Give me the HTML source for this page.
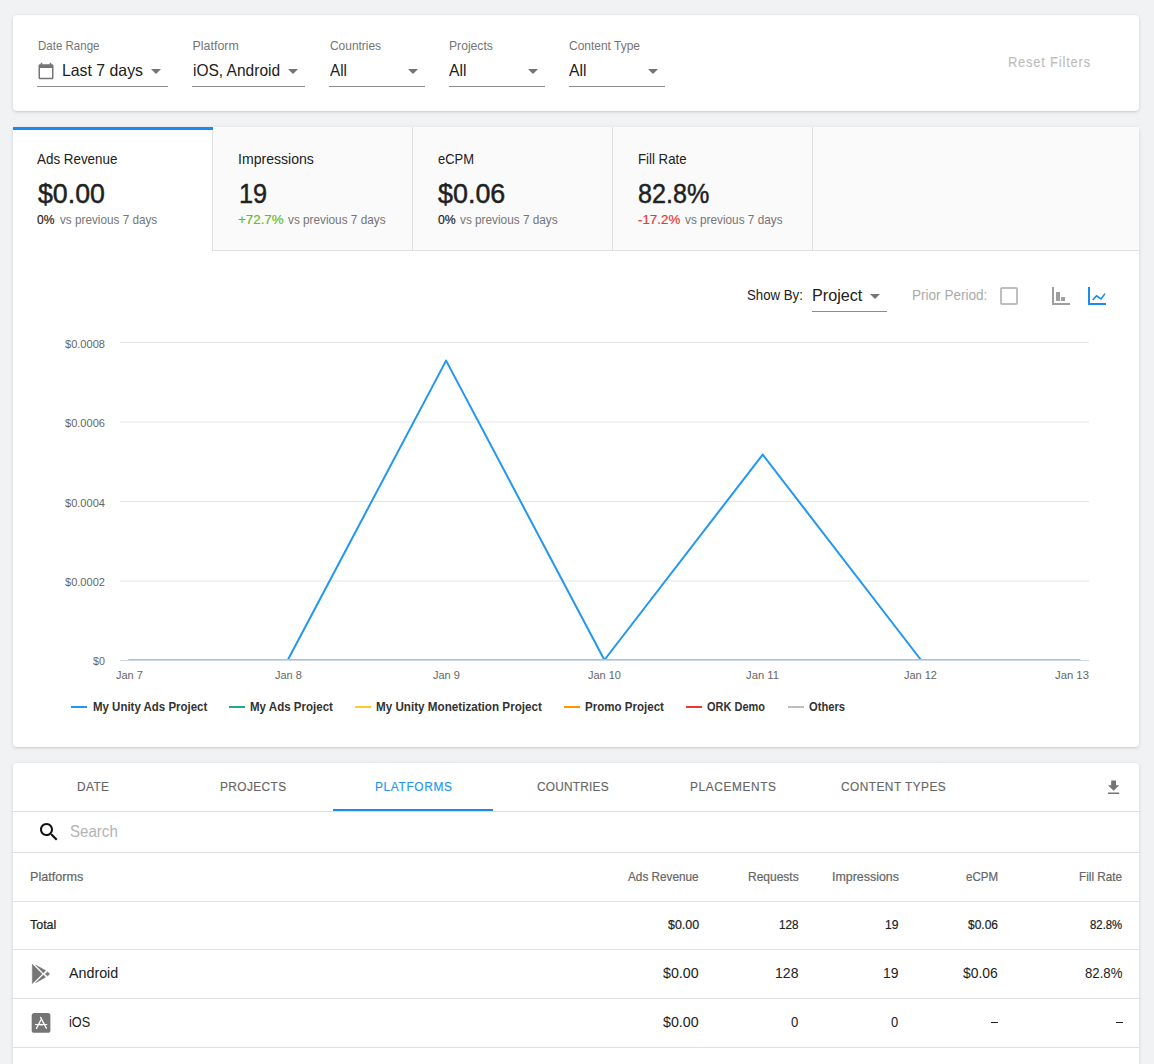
<!DOCTYPE html>
<html><head><meta charset="utf-8"><style>
html,body{margin:0;padding:0;}
body{width:1154px;height:1064px;overflow:hidden;background:#f1f2f4;position:relative;font-family:"Liberation Sans",sans-serif;}
.card{position:absolute;background:#fff;border-radius:4px;box-shadow:0 1px 4px rgba(0,0,0,.12),0 1px 1px rgba(0,0,0,.06);}
.t{position:absolute;line-height:0;white-space:nowrap;transform-origin:0 0;}
</style></head><body>
<div class="card" style="left:13px;top:15px;width:1126px;height:96px"></div>
<div class="t" style="left:37.80px;top:46px;font-size:12.4px;color:#757575;transform:scaleX(0.9290);">Date Range</div>
<div class="t" style="left:192.60px;top:46px;font-size:12.4px;color:#757575;">Platform</div>
<div class="t" style="left:329.50px;top:46px;font-size:12.4px;color:#757575;transform:scaleX(0.9632);">Countries</div>
<div class="t" style="left:449.10px;top:46px;font-size:12.4px;color:#757575;transform:scaleX(0.9799);">Projects</div>
<div class="t" style="left:569.30px;top:46px;font-size:12.4px;color:#757575;transform:scaleX(0.9667);">Content Type</div>
<div class="t" style="left:62.00px;top:70px;font-size:16.5px;color:#212121;transform:scaleX(0.9597);">Last 7 days</div>
<div class="t" style="left:192.60px;top:70px;font-size:16.5px;color:#212121;transform:scaleX(0.9401);">iOS, Android</div>
<div class="t" style="left:329.50px;top:70px;font-size:16.5px;color:#212121;transform:scaleX(0.9210);">All</div>
<div class="t" style="left:449.00px;top:70px;font-size:16.5px;color:#212121;transform:scaleX(0.9482);">All</div>
<div class="t" style="left:569.30px;top:70px;font-size:16.5px;color:#212121;transform:scaleX(0.9482);">All</div>
<div style="position:absolute;left:37px;top:86px;width:131px;height:1px;background:#8c8c8c"></div>
<svg style="position:absolute;left:151px;top:69px" width="10" height="5" viewBox="0 0 10 5"><path d="M0 0L10 0L5 5z" fill="#757575"/></svg>
<div style="position:absolute;left:192px;top:86px;width:113px;height:1px;background:#8c8c8c"></div>
<svg style="position:absolute;left:288px;top:69px" width="10" height="5" viewBox="0 0 10 5"><path d="M0 0L10 0L5 5z" fill="#757575"/></svg>
<div style="position:absolute;left:329px;top:86px;width:96px;height:1px;background:#8c8c8c"></div>
<svg style="position:absolute;left:408px;top:69px" width="10" height="5" viewBox="0 0 10 5"><path d="M0 0L10 0L5 5z" fill="#757575"/></svg>
<div style="position:absolute;left:449px;top:86px;width:96px;height:1px;background:#8c8c8c"></div>
<svg style="position:absolute;left:528px;top:69px" width="10" height="5" viewBox="0 0 10 5"><path d="M0 0L10 0L5 5z" fill="#757575"/></svg>
<div style="position:absolute;left:569px;top:86px;width:96px;height:1px;background:#8c8c8c"></div>
<svg style="position:absolute;left:648px;top:69px" width="10" height="5" viewBox="0 0 10 5"><path d="M0 0L10 0L5 5z" fill="#757575"/></svg>
<svg style="position:absolute;left:36.5px;top:62.25px" width="18" height="18" viewBox="0 0 24 24"><path fill="#757575" d="M20 3h-1V1h-2v2H7V1H5v2H4c-1.1 0-2 .9-2 2v16c0 1.1.9 2 2 2h16c1.1 0 2-.9 2-2V5c0-1.1-.9-2-2-2zm0 18H4V8h16v13z"/></svg>
<div class="t" style="left:1008.20px;top:62px;font-size:14.3px;color:#bdbdbd;letter-spacing:0.914px;-webkit-text-stroke:0.15px #bdbdbd;transform:scaleX(0.9000);">Reset Filters</div>
<div class="card" style="left:13px;top:127px;width:1126px;height:620px"></div>
<div style="position:absolute;left:213px;top:127px;width:926px;height:123px;background:#fafafa;border-bottom:1px solid #e0e0e0"></div>
<div style="position:absolute;left:212px;top:127px;width:1px;height:124px;background:#e0e0e0"></div>
<div style="position:absolute;left:412px;top:127px;width:1px;height:124px;background:#e0e0e0"></div>
<div style="position:absolute;left:612px;top:127px;width:1px;height:124px;background:#e0e0e0"></div>
<div style="position:absolute;left:812px;top:127px;width:1px;height:124px;background:#e0e0e0"></div>
<div style="position:absolute;left:13px;top:127px;width:200px;height:3px;background:#1a8cf0"></div>
<div class="t" style="left:37.30px;top:159px;font-size:14.5px;color:#212121;transform:scaleX(0.9236);">Ads Revenue</div>
<div class="t" style="left:237.50px;top:159px;font-size:14.5px;color:#212121;transform:scaleX(0.9712);">Impressions</div>
<div class="t" style="left:437.50px;top:159px;font-size:14.5px;color:#212121;transform:scaleX(0.8958);">eCPM</div>
<div class="t" style="left:637.50px;top:159px;font-size:14.5px;color:#212121;transform:scaleX(0.9135);">Fill Rate</div>
<div class="t" style="left:38.00px;top:194px;font-size:27px;color:#212121;-webkit-text-stroke:0.45px #212121;transform:scaleX(0.9904);">$0.00</div>
<div class="t" style="left:238.60px;top:194px;font-size:27px;color:#212121;-webkit-text-stroke:0.45px #212121;transform:scaleX(0.9351);">19</div>
<div class="t" style="left:438.00px;top:194px;font-size:27px;color:#212121;-webkit-text-stroke:0.45px #212121;transform:scaleX(0.9963);">$0.06</div>
<div class="t" style="left:638.00px;top:194px;font-size:27px;color:#212121;-webkit-text-stroke:0.45px #212121;transform:scaleX(0.9314);">82.8%</div>
<div class="t" style="left:37.30px;top:220px;font-size:12.4px;color:#212121;-webkit-text-stroke:0.18px #212121;transform:scaleX(0.9721);">0%</div>
<div class="t" style="left:60.00px;top:220px;font-size:12.4px;color:#757575;transform:scaleX(0.9474);">vs previous 7 days</div>
<div class="t" style="left:237.50px;top:220px;font-size:12.4px;color:#66bb33;-webkit-text-stroke:0.18px #66bb33;transform:scaleX(1.0778);">+72.7%</div>
<div class="t" style="left:288.00px;top:220px;font-size:12.4px;color:#757575;transform:scaleX(0.9503);">vs previous 7 days</div>
<div class="t" style="left:437.50px;top:220px;font-size:12.4px;color:#212121;-webkit-text-stroke:0.18px #212121;transform:scaleX(0.9888);">0%</div>
<div class="t" style="left:459.60px;top:220px;font-size:12.4px;color:#757575;transform:scaleX(0.9513);">vs previous 7 days</div>
<div class="t" style="left:637.50px;top:220px;font-size:12.4px;color:#e53935;-webkit-text-stroke:0.18px #e53935;transform:scaleX(1.0763);">-17.2%</div>
<div class="t" style="left:684.70px;top:220px;font-size:12.4px;color:#757575;transform:scaleX(0.9503);">vs previous 7 days</div>
<div class="t" style="left:747.20px;top:295px;font-size:14.5px;color:#212121;transform:scaleX(0.9110);">Show By:</div>
<div class="t" style="left:812.40px;top:295px;font-size:16.5px;color:#212121;transform:scaleX(0.9796);">Project</div>
<div style="position:absolute;left:812px;top:311px;width:75px;height:1px;background:#8c8c8c"></div>
<svg style="position:absolute;left:870px;top:294px" width="10" height="5" viewBox="0 0 10 5"><path d="M0 0L10 0L5 5z" fill="#757575"/></svg>
<div class="t" style="left:911.90px;top:295px;font-size:14.5px;color:#aaaaaa;transform:scaleX(0.9355);">Prior Period:</div>
<div style="position:absolute;left:1000px;top:287px;width:14px;height:14px;border:2px solid #bdbdbd;border-radius:2px"></div>
<svg style="position:absolute;left:1052px;top:287px" width="18" height="18" viewBox="0 0 18 18" fill="#9e9e9e"><rect x="0" y="0" width="2" height="18"/><rect x="0" y="16" width="18" height="2"/><rect x="4" y="5" width="4" height="9"/><rect x="9" y="10" width="4" height="4"/></svg>
<svg style="position:absolute;left:1088px;top:287px" width="18" height="18" viewBox="0 0 18 18"><rect x="0" y="0" width="2" height="18" fill="#1a8cf0"/><rect x="0" y="16" width="18" height="2" fill="#1a8cf0"/><path d="M4.6 13 L8.5 8.9 L13.1 11.9 L17 6.6" stroke="#1a8cf0" stroke-width="1.6" fill="none"/></svg>
<svg style="position:absolute;left:0;top:0" width="1154" height="760"><line x1="120" y1="342.5" x2="1089" y2="342.5" stroke="#e6e6e6" stroke-width="1"/><line x1="120" y1="422" x2="1089" y2="422" stroke="#e6e6e6" stroke-width="1"/><line x1="120" y1="501.5" x2="1089" y2="501.5" stroke="#e6e6e6" stroke-width="1"/><line x1="120" y1="581" x2="1089" y2="581" stroke="#e6e6e6" stroke-width="1"/><polyline fill="none" stroke="#2196f3" stroke-width="2" stroke-linejoin="round" stroke-linecap="round" points="129.50,660 287.80,660 446.10,360.6 604.40,660 762.70,454.6 921.00,660 1079.30,660"/><line x1="129.5" y1="660" x2="1079.3000000000002" y2="660" stroke="#bdbdbd" stroke-width="2" stroke-linecap="round"/><line x1="120" y1="660.5" x2="1089" y2="660.5" stroke="#ccd6eb" stroke-width="1"/></svg>
<div class="t" style="left:64.80px;top:344px;font-size:11.4px;color:#666666;transform:scaleX(0.9709);">$0.0008</div>
<div class="t" style="left:64.80px;top:423px;font-size:11.4px;color:#666666;transform:scaleX(0.9709);">$0.0006</div>
<div class="t" style="left:64.80px;top:503px;font-size:11.4px;color:#666666;transform:scaleX(0.9709);">$0.0004</div>
<div class="t" style="left:64.80px;top:582px;font-size:11.4px;color:#666666;transform:scaleX(0.9709);">$0.0002</div>
<div class="t" style="left:92.90px;top:661px;font-size:11.4px;color:#666666;transform:scaleX(0.9370);">$0</div>
<div class="t" style="left:116.30px;top:675px;font-size:11.4px;color:#666666;transform:scaleX(0.9642);">Jan 7</div>
<div class="t" style="left:274.50px;top:675px;font-size:11.4px;color:#666666;transform:scaleX(0.9642);">Jan 8</div>
<div class="t" style="left:432.75px;top:675px;font-size:11.4px;color:#666666;transform:scaleX(0.9642);">Jan 9</div>
<div class="t" style="left:587.95px;top:675px;font-size:11.4px;color:#666666;transform:scaleX(0.9635);">Jan 10</div>
<div class="t" style="left:746.20px;top:675px;font-size:11.4px;color:#666666;transform:scaleX(0.9880);">Jan 11</div>
<div class="t" style="left:904.45px;top:675px;font-size:11.4px;color:#666666;transform:scaleX(0.9635);">Jan 12</div>
<div class="t" style="left:1055.00px;top:675px;font-size:11.4px;color:#666666;transform:scaleX(0.9927);">Jan 13</div>
<div style="position:absolute;left:71px;top:706px;width:16px;height:2px;background:#2196f3"></div>
<div class="t" style="left:92.60px;top:707px;font-size:12.4px;color:#333333;font-weight:bold;transform:scaleX(0.9259);">My Unity Ads Project</div>
<div style="position:absolute;left:229px;top:706px;width:16px;height:2px;background:#26a69a"></div>
<div class="t" style="left:250.00px;top:707px;font-size:12.4px;color:#333333;font-weight:bold;transform:scaleX(0.9315);">My Ads Project</div>
<div style="position:absolute;left:355px;top:706px;width:16px;height:2px;background:#ffca28"></div>
<div class="t" style="left:376.00px;top:707px;font-size:12.4px;color:#333333;font-weight:bold;transform:scaleX(0.9413);">My Unity Monetization Project</div>
<div style="position:absolute;left:564px;top:706px;width:16px;height:2px;background:#ff9800"></div>
<div class="t" style="left:585.00px;top:707px;font-size:12.4px;color:#333333;font-weight:bold;transform:scaleX(0.9322);">Promo Project</div>
<div style="position:absolute;left:686px;top:706px;width:16px;height:2px;background:#e53935"></div>
<div class="t" style="left:707.00px;top:707px;font-size:12.4px;color:#333333;font-weight:bold;transform:scaleX(0.8862);">ORK Demo</div>
<div style="position:absolute;left:788px;top:706px;width:16px;height:2px;background:#bdbdbd"></div>
<div class="t" style="left:809.00px;top:707px;font-size:12.4px;color:#333333;font-weight:bold;transform:scaleX(0.9011);">Others</div>
<div class="card" style="left:13px;top:763px;width:1126px;height:400px"></div>
<div class="t" style="left:77.00px;top:787px;font-size:13.2px;color:#666666;letter-spacing:0.435px;-webkit-text-stroke:0.15px #666666;transform:scaleX(0.9000);">DATE</div>
<div class="t" style="left:219.95px;top:787px;font-size:13.2px;color:#666666;letter-spacing:0.435px;-webkit-text-stroke:0.15px #666666;transform:scaleX(0.9000);">PROJECTS</div>
<div class="t" style="left:374.50px;top:787px;font-size:13.2px;color:#2196f3;letter-spacing:0.732px;-webkit-text-stroke:0.15px #2196f3;transform:scaleX(0.9000);">PLATFORMS</div>
<div class="t" style="left:537.15px;top:787px;font-size:13.2px;color:#666666;letter-spacing:0.240px;-webkit-text-stroke:0.15px #666666;transform:scaleX(0.9000);">COUNTRIES</div>
<div class="t" style="left:689.95px;top:787px;font-size:13.2px;color:#666666;letter-spacing:0.685px;-webkit-text-stroke:0.15px #666666;transform:scaleX(0.9000);">PLACEMENTS</div>
<div class="t" style="left:840.60px;top:787px;font-size:13.2px;color:#666666;letter-spacing:0.516px;-webkit-text-stroke:0.15px #666666;transform:scaleX(0.9000);">CONTENT TYPES</div>
<div style="position:absolute;left:333px;top:809px;width:160px;height:2px;background:#1a8cf0"></div>
<div style="position:absolute;left:13px;top:811px;width:1126px;height:1px;background:#e0e0e0"></div>
<svg style="position:absolute;left:1103.6px;top:777.6px" width="19.2" height="19.2" viewBox="0 0 24 24"><path fill="#757575" d="M19 9h-4V3H9v6H5l7 7 7-7zM5 18v2h14v-2H5z"/></svg>
<svg style="position:absolute;left:37px;top:820px" width="24" height="24" viewBox="0 0 24 24"><path fill="#111" d="M15.5 14h-.79l-.28-.27C15.41 12.59 16 11.11 16 9.5 16 5.91 13.09 3 9.5 3S3 5.91 3 9.5 5.91 16 9.5 16c1.61 0 3.09-.59 4.23-1.57l.27.28v.79l5 4.99L20.49 19l-4.99-5zm-6 0C7.01 14 5 11.99 5 9.5S7.01 5 9.5 5 14 7.01 14 9.5 11.99 14 9.5 14z"/></svg>
<div class="t" style="left:69.70px;top:831px;font-size:16.5px;color:#b3b3b3;transform:scaleX(0.9140);">Search</div>
<div style="position:absolute;left:13px;top:852px;width:1126px;height:1px;background:#e0e0e0"></div>
<div style="position:absolute;left:13px;top:901px;width:1126px;height:1px;background:#e0e0e0"></div>
<div style="position:absolute;left:13px;top:949px;width:1126px;height:1px;background:#e0e0e0"></div>
<div style="position:absolute;left:13px;top:998px;width:1126px;height:1px;background:#e0e0e0"></div>
<div style="position:absolute;left:13px;top:1047px;width:1126px;height:1px;background:#e0e0e0"></div>
<div class="t" style="left:29.50px;top:877px;font-size:12.4px;color:#666666;-webkit-text-stroke:0.2px #666666;transform:scaleX(1.0181);">Platforms</div>
<div class="t" style="left:628.20px;top:877px;font-size:12.4px;color:#666666;-webkit-text-stroke:0.2px #666666;transform:scaleX(0.9496);">Ads Revenue</div>
<div class="t" style="left:747.80px;top:877px;font-size:12.4px;color:#666666;-webkit-text-stroke:0.2px #666666;transform:scaleX(0.9676);">Requests</div>
<div class="t" style="left:831.50px;top:877px;font-size:12.4px;color:#666666;-webkit-text-stroke:0.2px #666666;transform:scaleX(1.0022);">Impressions</div>
<div class="t" style="left:966.10px;top:877px;font-size:12.4px;color:#666666;-webkit-text-stroke:0.2px #666666;transform:scaleX(0.9318);">eCPM</div>
<div class="t" style="left:1079.30px;top:877px;font-size:12.4px;color:#666666;-webkit-text-stroke:0.2px #666666;transform:scaleX(0.9495);">Fill Rate</div>
<div class="t" style="left:29.50px;top:925px;font-size:12.4px;color:#212121;-webkit-text-stroke:0.2px #212121;transform:scaleX(1.0038);">Total</div>
<div class="t" style="left:667.70px;top:925px;font-size:12.4px;color:#212121;-webkit-text-stroke:0.2px #212121;transform:scaleX(1.0048);">$0.00</div>
<div class="t" style="left:779.00px;top:925px;font-size:12.4px;color:#212121;-webkit-text-stroke:0.2px #212121;transform:scaleX(0.9420);">128</div>
<div class="t" style="left:885.00px;top:925px;font-size:12.4px;color:#212121;-webkit-text-stroke:0.2px #212121;transform:scaleX(0.9783);">19</div>
<div class="t" style="left:968.20px;top:925px;font-size:12.4px;color:#212121;-webkit-text-stroke:0.2px #212121;transform:scaleX(0.9662);">$0.06</div>
<div class="t" style="left:1090.30px;top:925px;font-size:12.4px;color:#212121;-webkit-text-stroke:0.2px #212121;transform:scaleX(0.9161);">82.8%</div>
<div class="t" style="left:69.30px;top:973px;font-size:14.5px;color:#212121;transform:scaleX(0.9840);">Android</div>
<div class="t" style="left:663.30px;top:973px;font-size:14.5px;color:#212121;transform:scaleX(0.9807);">$0.00</div>
<div class="t" style="left:775.00px;top:973px;font-size:14.5px;color:#212121;transform:scaleX(0.9711);">128</div>
<div class="t" style="left:883.00px;top:973px;font-size:14.5px;color:#212121;transform:scaleX(0.9598);">19</div>
<div class="t" style="left:963.40px;top:973px;font-size:14.5px;color:#212121;transform:scaleX(0.9587);">$0.06</div>
<div class="t" style="left:1085.10px;top:973px;font-size:14.5px;color:#212121;transform:scaleX(0.9100);">82.8%</div>
<div class="t" style="left:69.30px;top:1022px;font-size:14.5px;color:#212121;transform:scaleX(0.8778);">iOS</div>
<div class="t" style="left:663.30px;top:1022px;font-size:14.5px;color:#212121;transform:scaleX(0.9807);">$0.00</div>
<div class="t" style="left:791.20px;top:1022px;font-size:14.5px;color:#212121;transform:scaleX(0.9068);">0</div>
<div class="t" style="left:891.30px;top:1022px;font-size:14.5px;color:#212121;transform:scaleX(0.8944);">0</div>
<div style="position:absolute;left:991px;top:1021.6px;width:7px;height:1.2px;background:#212121"></div>
<div style="position:absolute;left:1115.5px;top:1021.6px;width:7px;height:1.2px;background:#212121"></div>
<svg style="position:absolute;left:26px;top:958px" width="30" height="30" viewBox="26 958 30 30"><g fill="#757575" stroke="#757575" stroke-width="0.5" stroke-linejoin="round"><path d="M32.3 964.3 L42.1 973.9 L32.3 983.6z"/><path d="M35.7 965.1 L45.6 970.6 L43.4 972.9z"/><path d="M35.7 982.7 L45.6 977.2 L43.4 974.9z"/><path d="M45.3 973.9 L47.5 971.9 L49.6 973.9 L47.5 975.9z"/></g></svg>
<svg style="position:absolute;left:26px;top:1008px" width="30" height="30" viewBox="26 1008 30 30"><rect x="31.7" y="1013.1" width="18.7" height="19.7" rx="2.6" fill="#757575"/><g stroke="#fff" stroke-linecap="round" fill="none"><path d="M36.5 1028.4 L41 1019.8" stroke-width="1.3"/><path d="M40.6 1017.4 L46.4 1028.3" stroke-width="1.3"/><path d="M35.3 1024.6 L46.8 1024.6" stroke-width="1"/></g><rect x="39.6" y="1023.9" width="3.4" height="1.5" fill="#fff"/></svg>
</body></html>
